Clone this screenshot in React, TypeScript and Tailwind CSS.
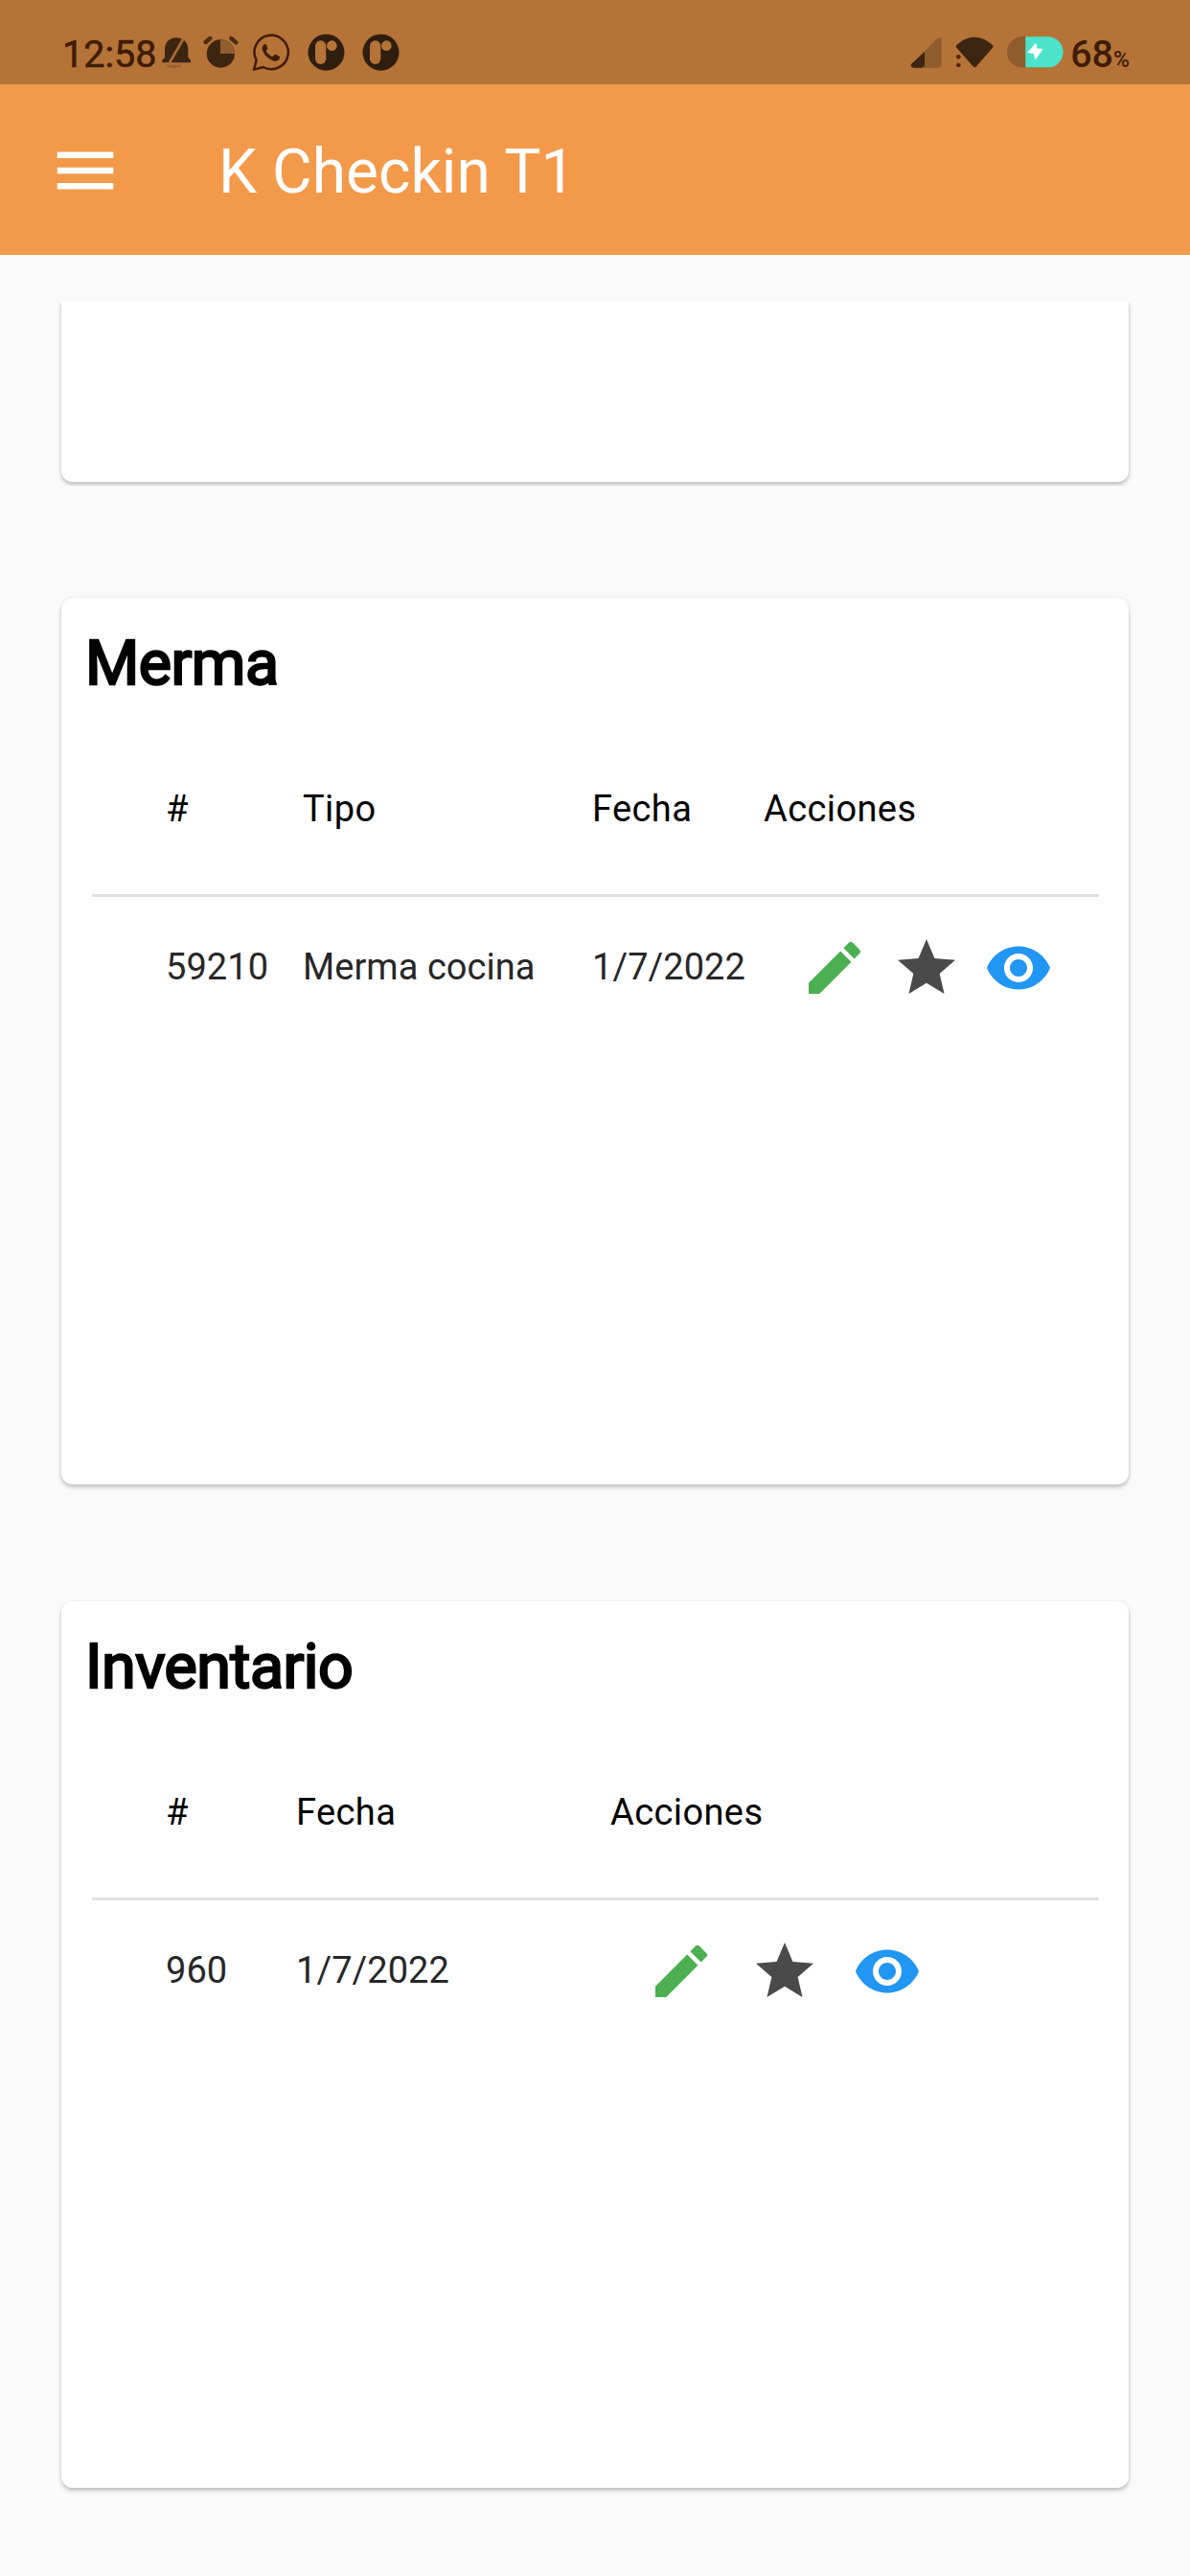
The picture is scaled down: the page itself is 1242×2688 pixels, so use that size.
import React, { type JSX } from "react";

type Column = {
  label: string;
  value?: string;
  width: string;
};

type Section = {
  title: string;
  columns: Column[];
  actions: string;
};

const sections: Section[] = [
  {
    title: "Merma",
    columns: [
      { label: "#", value: "59210", width: "w-[143px]" },
      { label: "Tipo", value: "Merma cocina", width: "w-[302px]" },
      { label: "Fecha", value: "1/7/2022", width: "w-[179px]" },
      { label: "Acciones", width: "w-[200px]" },
    ],
    actions: "ml-[38px] gap-6",
  },
  {
    title: "Inventario",
    columns: [
      { label: "#", value: "960", width: "w-[136px]" },
      { label: "Fecha", value: "1/7/2022", width: "w-[328px]" },
      { label: "Acciones", width: "w-[200px]" },
    ],
    actions: "ml-[38px] gap-[35.5px]",
  },
];

function Actions({ className }: { className: string }): JSX.Element {
  return (
    <div className={["flex shrink-0 items-center", className].join(" ")}>
      <button type="button" aria-label="Editar">
        <svg viewBox="0 0 24 24" className="block h-[72px] w-[72px] fill-[#4caf50]">
          <path d="M3 17.25V21h3.75L17.81 9.94l-3.75-3.75L3 17.25zM20.71 7.04a1 1 0 0 0 0-1.41l-2.34-2.34a1 1 0 0 0-1.41 0l-1.83 1.83 3.75 3.75 1.83-1.83z" />
        </svg>
      </button>
      <button type="button" aria-label="Destacar">
        <svg viewBox="0 0 24 24" className="block h-[72px] w-[72px] fill-[#4a4a4a]">
          <path d="M12 17.27L18.18 21l-1.64-7.03L22 9.24l-7.19-.61L12 2 9.19 8.63 2 9.24l5.46 4.73L5.82 21z" />
        </svg>
      </button>
      <button type="button" aria-label="Ver">
        <svg viewBox="0 0 24 24" className="block h-[72px] w-[72px] fill-[#2196f3]">
          <path d="M12 4.5C7 4.5 2.73 7.61 1 12c1.73 4.39 6 7.5 11 7.5s9.27-3.11 11-7.5c-1.73-4.39-6-7.5-11-7.5zM12 17c-2.76 0-5-2.24-5-5s2.24-5 5-5 5 2.24 5 5-2.24 5-5 5zm0-8c-1.66 0-3 1.34-3 3s1.34 3 3 3 3-1.34 3-3-1.34-3-3-3z" />
        </svg>
      </button>
    </div>
  );
}

function SectionCard({ section }: { section: Section }): JSX.Element {
  return (
    <section className="mx-16 h-[925px] rounded-[12px] bg-white shadow-[0_3px_4px_rgba(0,0,0,0.22),0_0_4px_rgba(0,0,0,0.06)]">
      <h2 className="flex h-[131px] items-center pt-[6px] pl-[25px] text-[64.500px] font-normal tracking-[-0.5px] text-black [-webkit-text-stroke:2.4px_black]">
        {section.title}
      </h2>

      <div className="ml-8 mr-[31px] flex h-[181px] items-center border-b-[3px] border-[#e0e0e0] pl-[77px] text-[38px] tracking-[0.4px] text-black">
        {section.columns.map((col) => (
          <span key={col.label} className={["shrink-0", col.width].join(" ")}>
            {col.label}
          </span>
        ))}
      </div>

      <div className="mx-8 flex h-[147px] items-center pl-[77px] text-[38px] tracking-[0.05px] whitespace-nowrap text-[#272727]">
        {section.columns.map((col) =>
          col.value ? (
            <span key={col.label} className={["shrink-0", col.width].join(" ")}>
              {col.value}
            </span>
          ) : (
            <Actions key={col.label} className={section.actions} />
          ),
        )}
      </div>
    </section>
  );
}

function ParkingIcon({ className }: { className: string }): JSX.Element {
  return (
    <svg viewBox="843 70 117 132" className={["h-11 w-[39px] shrink-0", className].join(" ")}>
      <circle cx="901.500" cy="135" r="57" fill="#2f1d0e" />
      <rect x="867" y="98" width="34" height="74" rx="17" fill="#b57338" />
      <circle cx="919" cy="114" r="16" fill="#b57338" />
    </svg>
  );
}

function StatusBar(): JSX.Element {
  return (
    <div className="flex h-[88px] justify-between bg-[#b57338] pt-[33px] pr-[63px] pl-[65px] text-[#3f1c04]">
      <div className="flex h-11 items-center">
        <span className="w-[104px] shrink-0 pt-[3px] text-[39.500px] leading-none font-normal [-webkit-text-stroke:0.6px_#3f1c04]">
          12:58
        </span>
        <svg viewBox="388 70 90 132" className="h-11 w-[30px] shrink-0">
          <path
            d="M389 167v-8l8-8v-24c0-24 15-38 36-38s37 14 37 38v24l8 8v8z"
            fill="#3c2511"
          />
          <path d="M400 174h50c-4 8-10 10-17 8-8 5-16 2-19-2-5 4-12 0-14-6z" fill="#986230" />
          <path d="M411 169L456 91" stroke="#a76b35" strokeWidth="8" />
        </svg>
        <svg viewBox="516 70 111 132" className="ml-[13px] h-11 w-[37px] shrink-0">
          <circle cx="571" cy="139" r="44" fill="#3c2511" />
          <path d="M570 95a44 44 0 0 1 45 44h-45z" fill="#915d2e" />
          <path d="M524 103l14-12M604 91l15 13" stroke="#4b2d14" strokeWidth="13" strokeLinecap="round" />
        </svg>
        <svg viewBox="669 70 120 132" className="ml-[14px] h-11 w-10 shrink-0">
          <path
            d="M675 189l8-29a53 53 0 1 1 21 21z"
            fill="none"
            stroke="#3f1c04"
            strokeWidth="7.5"
            strokeLinejoin="round"
          />
          <path
            d="M711 109c-8 2-12 11-9 19 6 17 20 30 38 34 8 1 16-4 16-12 0-3-12-9-15-9-4 1-5 8-9 7-9-3-16-10-19-18 1-3 6-5 5-9-1-3-4-12-7-12z"
            fill="#3f1c04"
          />
        </svg>
        <ParkingIcon className="ml-[18px]" />
        <ParkingIcon className="ml-[18px]" />
      </div>

      <div className="flex h-11 items-center">
        <svg viewBox="88 70 99 132" className="h-11 w-[33px] shrink-0">
          <path d="M92 171l80-79q14-8 14 6v75q0 10-10 10H98q-12-2-6-12z" fill="#8f5c2d" />
          <path d="M92 171l41-38v40q0 10-10 10H98q-12-2-6-12z" fill="#3c2511" />
        </svg>
        <svg viewBox="228 70 120 132" className="ml-[14px] h-11 w-10 shrink-0">
          <path
            d="M232 112q56-49 113 0 4 4 0 8l-52 60q-4 4-8 0l-53-60q-4-4 0-8z"
            fill="#3c2511"
          />
          <circle cx="238" cy="149" r="7" fill="#4f2406" />
          <circle cx="238" cy="175" r="7" fill="#4f2406" />
        </svg>
        <svg viewBox="390 70 177 132" className="ml-[14px] h-11 w-[59px] shrink-0">
          <path d="M448 86h-10a48 48 0 0 0 0 96h10z" fill="#8f5c2d" />
          <path d="M448 86h70a48 48 0 0 1 0 96h-70z" fill="#4be3cb" />
          <path
            d="M480 109l-23 26 18 2 4 17 21-28-18-2z"
            fill="white"
            stroke="white"
            strokeWidth="4"
            strokeLinejoin="round"
          />
        </svg>
        <div className="ml-[7px] flex items-baseline pt-[3px] leading-none">
          <span className="text-[39.500px] font-medium">68</span>
          <span className="text-[23px] font-medium">%</span>
        </div>
      </div>
    </div>
  );
}

export default function App(): JSX.Element {
  return (
    <div className="h-[2688px] w-[1242px] overflow-hidden bg-[#fafafa] font-[Roboto,sans-serif]">
      <StatusBar />

      <header className="flex h-[178px] items-center bg-[#f39a4a] pt-[1px] pl-[50px] text-white">
        <button type="button" aria-label="Menú">
          <svg viewBox="0 0 24 24" className="block h-[78px] w-[78px] fill-white">
            <path d="M3 18h18v-2H3v2zm0-5h18v-2H3v2zm0-7v2h18V6H3z" />
          </svg>
        </button>
        <h1 className="ml-[100px] pt-[4px] text-[64px] font-normal whitespace-nowrap">K Checkin T1</h1>
      </header>

      <main className="flex flex-col pt-12">
        {/* tail of the card scrolled under the header */}
        <div className="h-[193px] overflow-hidden px-16">
          <div className="h-[189px] rounded-b-[12px] bg-white shadow-[0_3px_4px_rgba(0,0,0,0.22),0_0_4px_rgba(0,0,0,0.06)]" />
        </div>
        <div className="mt-[117px] flex flex-col gap-[122px]">
          {sections.map((section) => (
            <SectionCard key={section.title} section={section} />
          ))}
        </div>
      </main>
    </div>
  );
}
